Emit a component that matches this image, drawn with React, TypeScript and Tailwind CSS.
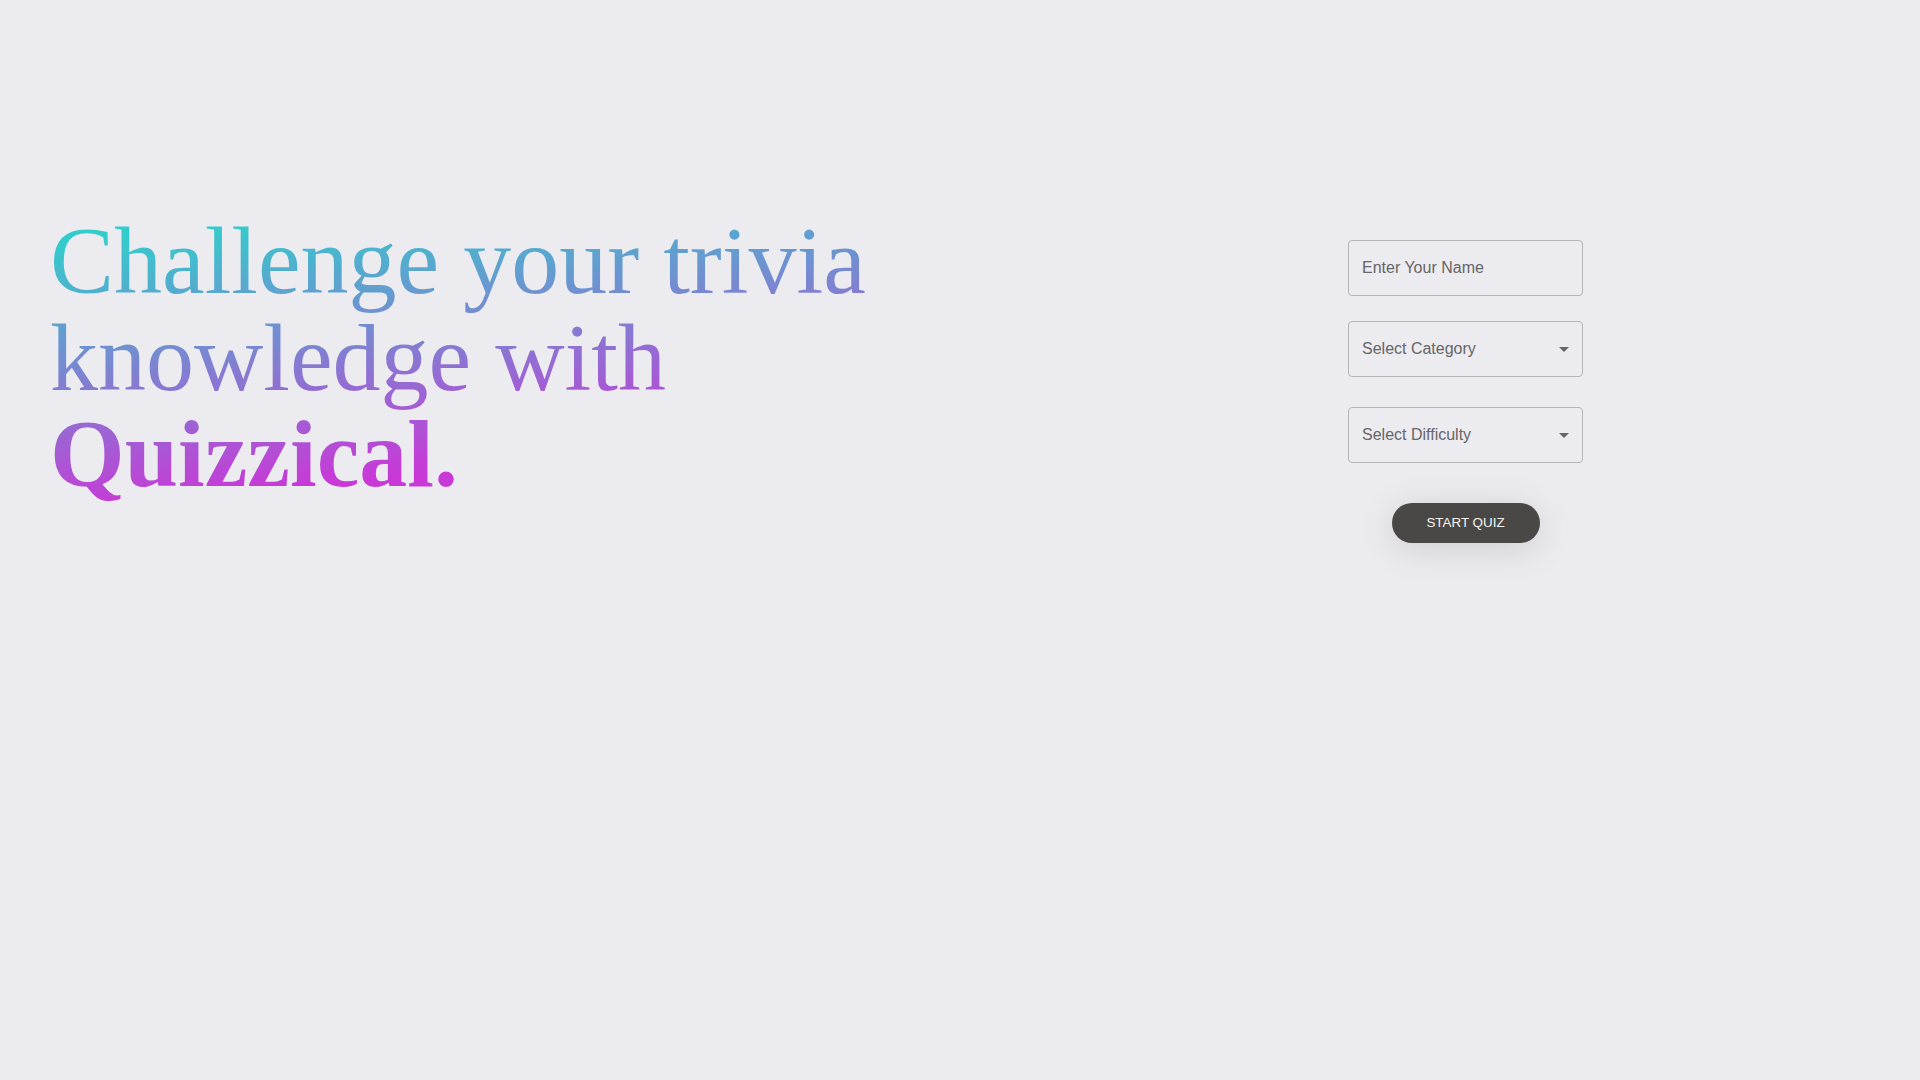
import React from "react";

function Caret() {
  return (
    <svg width="10" height="5" viewBox="0 0 10 5" className="shrink-0">
      <path d="M0 0 L10 0 L5 5 Z" fill="#666666" />
    </svg>
  );
}

function FakeSelect({ label }: { label: string }) {
  return (
    <div className="w-[235px] h-[56px] border border-[#b4b3b8] rounded-[4px] flex items-center justify-between pl-[13px] pr-[13px] text-[16px] text-[#666666] cursor-pointer">
      <span>{label}</span>
      <Caret />
    </div>
  );
}

export default function App() {
  return (
    <div className="min-h-screen w-full bg-[#ecebf0] flex items-start pt-[213px] pl-[50px] font-['Liberation_Sans',Arial,sans-serif]">
      <h1 className="w-fit font-['Liberation_Serif','Times_New_Roman',serif] text-[96px] leading-[96.5px] font-normal bg-[linear-gradient(173deg,#33cccc_8%,#c839d7_78%)] bg-clip-text text-transparent">
        <span className="block">Challenge your trivia</span>
        <span className="block">knowledge with</span>
        <span className="block font-bold">Quizzical.</span>
      </h1>
      <div className="flex-1" />
      <form className="w-[235px] mt-[27px] mr-[337px] flex flex-col items-center" onSubmit={(e) => e.preventDefault()}>
        <input
          type="text"
          placeholder="Enter Your Name"
          className="w-[235px] h-[56px] border border-[#b4b3b8] rounded-[4px] px-[13px] text-[16px] text-[#333] bg-transparent outline-none placeholder:text-[#666666]"
        />
        <div className="mt-[25px]">
          <FakeSelect label="Select Category" />
        </div>
        <div className="mt-[30px]">
          <FakeSelect label="Select Difficulty" />
        </div>
        <button
          type="submit"
          className="mt-[40px] w-[148px] h-[40px] rounded-full bg-[#4a4846] text-[#f7f4f0] text-[13.4px] uppercase shadow-[0_6px_36px_rgba(0,0,0,0.13)]"
        >
          Start Quiz
        </button>
      </form>
    </div>
  );
}
